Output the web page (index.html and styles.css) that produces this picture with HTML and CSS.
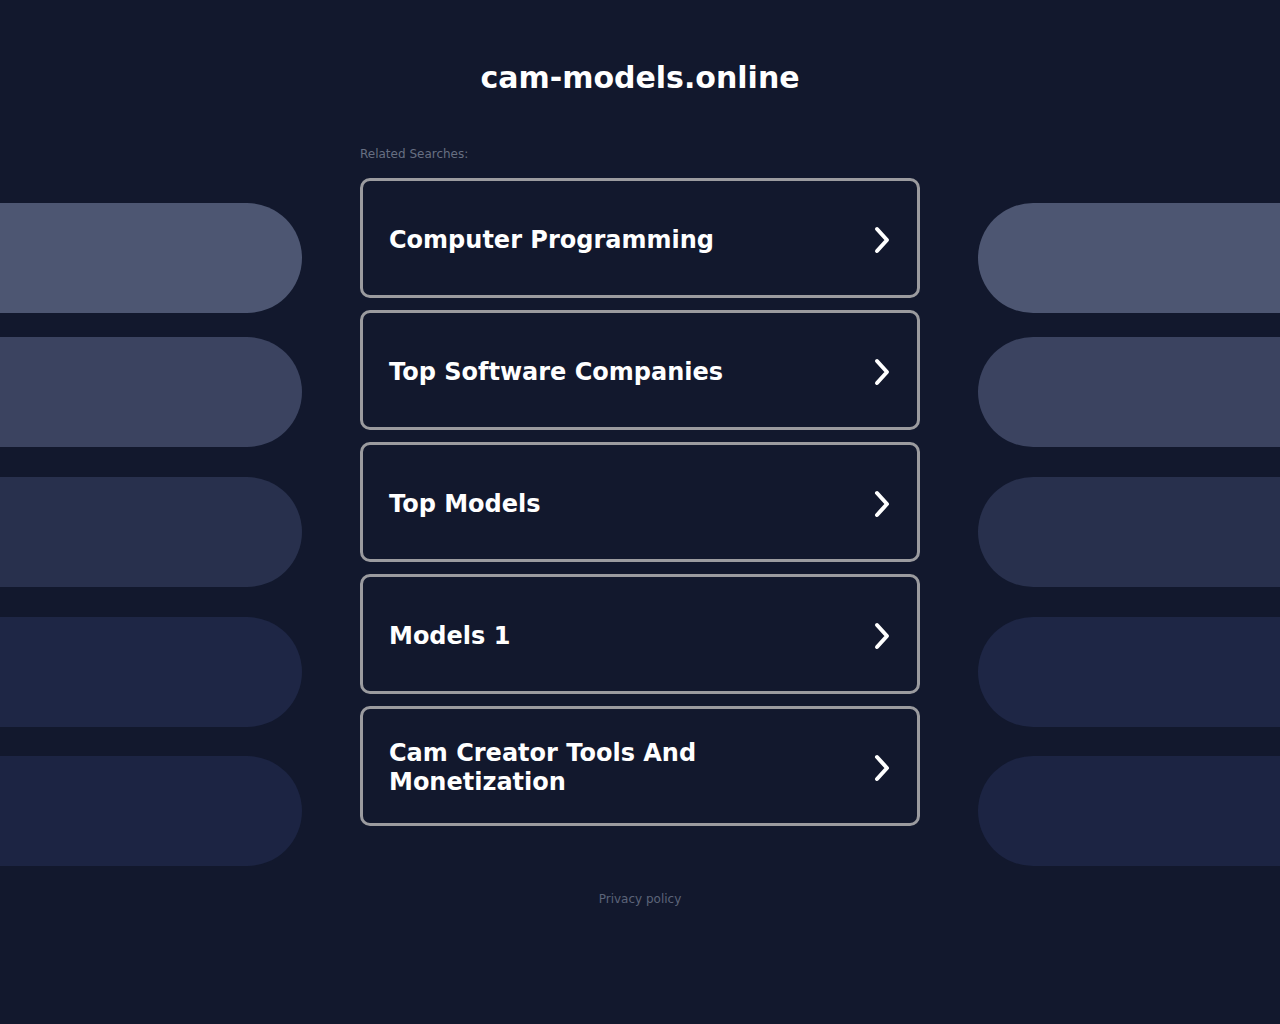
FILE: index.html
```html
<!DOCTYPE html>
<html lang="en">
<head>
<meta charset="utf-8">
<title>cam-models.online</title>
<link rel="stylesheet" href="styles.css">
</head>
<body>
<header class="header">
  <h1 class="title">cam-models.online</h1>
</header>
<div class="layout">
  <div class="pills pills-left">
    <div class="pill pill-1"></div>
    <div class="pill pill-2"></div>
    <div class="pill pill-3"></div>
    <div class="pill pill-4"></div>
    <div class="pill pill-5"></div>
  </div>
  <main class="center">
    <div class="label">Related Searches:</div>
    <div class="cards">
      <a class="card" href="#"><span class="card-text">Computer Programming</span><svg class="chev" viewBox="0 0 20 30" width="20" height="30"><path d="M5 4 L15 15 L5 26" fill="none" stroke="#fff" stroke-width="4" stroke-linecap="round" stroke-linejoin="round"/></svg></a>
      <a class="card" href="#"><span class="card-text">Top Software Companies</span><svg class="chev" viewBox="0 0 20 30" width="20" height="30"><path d="M5 4 L15 15 L5 26" fill="none" stroke="#fff" stroke-width="4" stroke-linecap="round" stroke-linejoin="round"/></svg></a>
      <a class="card" href="#"><span class="card-text">Top Models</span><svg class="chev" viewBox="0 0 20 30" width="20" height="30"><path d="M5 4 L15 15 L5 26" fill="none" stroke="#fff" stroke-width="4" stroke-linecap="round" stroke-linejoin="round"/></svg></a>
      <a class="card" href="#"><span class="card-text">Models 1</span><svg class="chev" viewBox="0 0 20 30" width="20" height="30"><path d="M5 4 L15 15 L5 26" fill="none" stroke="#fff" stroke-width="4" stroke-linecap="round" stroke-linejoin="round"/></svg></a>
      <a class="card" href="#"><span class="card-text">Cam Creator Tools And<br>Monetization</span><svg class="chev" viewBox="0 0 20 30" width="20" height="30"><path d="M5 4 L15 15 L5 26" fill="none" stroke="#fff" stroke-width="4" stroke-linecap="round" stroke-linejoin="round"/></svg></a>
    </div>
  </main>
  <div class="pills pills-right">
    <div class="pill pill-1"></div>
    <div class="pill pill-2"></div>
    <div class="pill pill-3"></div>
    <div class="pill pill-4"></div>
    <div class="pill pill-5"></div>
  </div>
</div>
<footer class="footer"><a class="privacy" href="#">Privacy policy</a></footer>
</body>
</html>
```

FILE: styles.css
```css
html, body {
  margin: 0;
  padding: 0;
  background: #12182d;
  font-family: "DejaVu Sans", "Liberation Sans", sans-serif;
  color: #fff;
}
body {
  min-height: 1024px;
}
.header {
  height: 140px;
  display: flex;
  justify-content: center;
}
.title {
  margin: 0;
  padding-top: 60px;
  font-size: 30px;
  line-height: 36px;
  font-weight: bold;
  color: #fff;
}
.layout {
  display: grid;
  grid-template-columns: 1fr 560px 1fr;
  column-gap: 58px;
}
.pills {
  display: flex;
  flex-direction: column;
  padding-top: 63px;
}
.pill {
  height: 110px;
}
.pills-left .pill {
  border-radius: 0 55px 55px 0;
}
.pills-right .pill {
  border-radius: 55px 0 0 55px;
}
.pill-2 { margin-top: 24px; }
.pill-3 { margin-top: 30px; }
.pill-4 { margin-top: 30px; }
.pill-5 { margin-top: 29px; }
.pill-1 { background: #4d5672; }
.pill-2 { background: #3b4360; }
.pill-3 { background: #28304d; }
.pill-4 { background: #1e2645; }
.pill-5 { background: #1c2443; }
.center {
  display: flex;
  flex-direction: column;
}
.label {
  margin-top: 6px;
  margin-bottom: 16px;
  font-size: 12px;
  line-height: 16px;
  color: #676f82;
}
.cards {
  display: flex;
  flex-direction: column;
  gap: 12px;
}
.card {
  box-sizing: border-box;
  height: 120px;
  border: 3px solid #9b9b9f;
  border-radius: 10px;
  display: flex;
  align-items: center;
  justify-content: space-between;
  padding: 4px 25px 0 26px;
  text-decoration: none;
  color: #fff;
}
.card-text {
  font-size: 24px;
  line-height: 29px;
  font-weight: bold;
}
.chev {
  display: block;
  flex: none;
}
.footer {
  margin-top: 22px;
  text-align: center;
}
.privacy {
  font-size: 12px;
  line-height: 16px;
  color: #5c6479;
  text-decoration: none;
}
```
